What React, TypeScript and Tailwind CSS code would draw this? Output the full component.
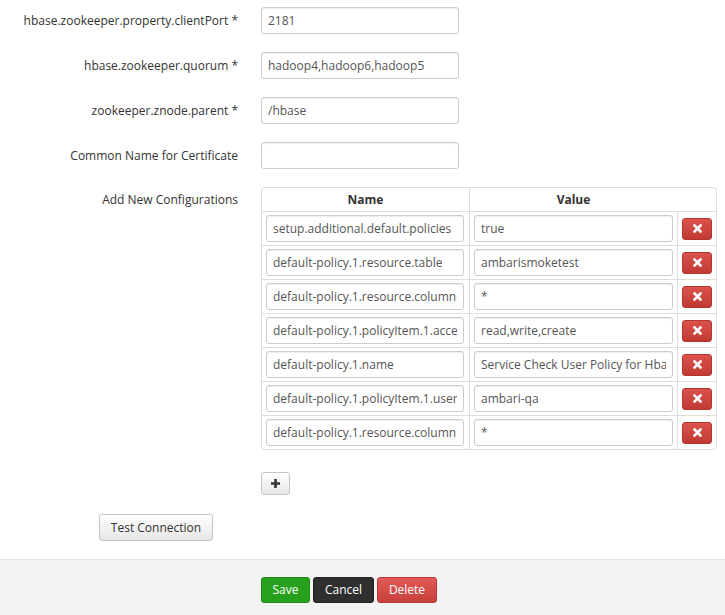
import React from "react";

const fields = [
  { label: "hbase.zookeeper.property.clientPort *", value: "2181" },
  { label: "hbase.zookeeper.quorum *", value: "hadoop4,hadoop6,hadoop5" },
  { label: "zookeeper.znode.parent *", value: "/hbase" },
  { label: "Common Name for Certificate", value: "" },
];

const rows = [
  ["setup.additional.default.policies", "true"],
  ["default-policy.1.resource.table", "ambarismoketest"],
  ["default-policy.1.resource.column-family", "*"],
  ["default-policy.1.policyItem.1.accessTypes", "read,write,create"],
  ["default-policy.1.name", "Service Check User Policy for Hbase"],
  ["default-policy.1.policyItem.1.users", "ambari-qa"],
  ["default-policy.1.resource.column", "*"],
];

function XIcon() {
  return (
    <svg width="9" height="9" viewBox="0 0 9 9">
      <path d="M1.5 1.5 L7.5 7.5 M7.5 1.5 L1.5 7.5" stroke="white" strokeWidth="2.6" strokeLinecap="square" />
    </svg>
  );
}

function PlusIcon() {
  return (
    <svg width="11" height="11" viewBox="0 0 11 11">
      <path d="M5.5 1 V10 M1 5.5 H10" stroke="#333" strokeWidth="2.6" />
    </svg>
  );
}

function Field({ value, width }: { value: string; width: string }) {
  return (
    <div className={`${width} h-[27px] border border-[#ccc] rounded-[3px] px-[6px] flex items-center text-[#555] shadow-[inset_0_1px_1px_rgba(0,0,0,0.075)]`}>
      <span className="block w-full overflow-hidden whitespace-nowrap">{value}</span>
    </div>
  );
}

export default function App() {
  return (
    <div className="w-[725px] h-[615px] bg-white overflow-hidden flex flex-col text-[12px] text-[#333]" style={{ fontFamily: '"Open Sans", sans-serif' }}>
      <div className="flex-1 flex flex-col pt-[7px]">
        {fields.map((f) => (
          <div key={f.label} className="flex items-center h-[27px] mb-[18px]">
            <div className="w-[238px] text-right">{f.label}</div>
            <div className="ml-[23px]">
              <Field value={f.value} width="w-[198px]" />
            </div>
          </div>
        ))}
        <div className="flex">
          <div className="w-[238px] text-right pt-[4px]">Add New Configurations</div>
          <div className="ml-[23px]">
            <table className="border-separate border-spacing-0 w-[456px] border border-[#ddd] rounded-[4px] table-fixed">
              <colgroup>
                <col className="w-[207px]" />
                <col className="w-[208px]" />
                <col className="w-[39px]" />
              </colgroup>
              <thead>
                <tr className="h-[23px]">
                  <th className="font-bold text-center p-0">Name</th>
                  <th className="font-bold text-center p-0 border-l border-[#ddd]">Value</th>
                  <th className="p-0"></th>
                </tr>
              </thead>
              <tbody>
                {rows.map((r, i) => (
                  <tr key={i} className="h-[34px]">
                    <td className="border-t border-[#ddd] pl-[4px] pr-0 py-0">
                      <Field value={r[0]} width="w-[198px]" />
                    </td>
                    <td className="border-t border-l border-[#ddd] pl-[4px] pr-0 py-0">
                      <Field value={r[1]} width="w-[199px]" />
                    </td>
                    <td className="border-t border-l border-[#ddd] py-0 pl-[4px]">
                      <div className="w-[30px] h-[22px] rounded-[3px] border border-[#b33630] bg-gradient-to-b from-[#dc524c] to-[#c03a33] flex items-center justify-center">
                        <XIcon />
                      </div>
                    </td>
                  </tr>
                ))}
              </tbody>
            </table>
            <div className="mt-[22px] w-[29px] h-[23px] rounded-[3px] border border-[#c5c5c5] bg-gradient-to-b from-white to-[#e6e6e6] flex items-center justify-center">
              <PlusIcon />
            </div>
          </div>
        </div>
        <div className="ml-[99px] mt-[19px] w-[114px] h-[27px] rounded-[3px] border border-[#c5c5c5] bg-gradient-to-b from-white to-[#e6e6e6] flex items-center justify-center text-[#333]">
          Test Connection
        </div>
      </div>
      <div className="h-[56px] bg-[#f3f3f3] border-t border-[#e3e3e3] flex items-start pt-[17px] pl-[261px] gap-[3px]">
        <div className="w-[49px] h-[26px] rounded-[3px] border border-[#1f8a14] bg-[#27a11d] text-white flex items-center justify-center">Save</div>
        <div className="w-[61px] h-[26px] rounded-[3px] border border-[#222] bg-[#2f2f2f] text-white flex items-center justify-center">Cancel</div>
        <div className="w-[60px] h-[26px] rounded-[3px] border border-[#b73a36] bg-gradient-to-b from-[#e15a57] to-[#c8403b] text-white flex items-center justify-center">Delete</div>
      </div>
    </div>
  );
}
